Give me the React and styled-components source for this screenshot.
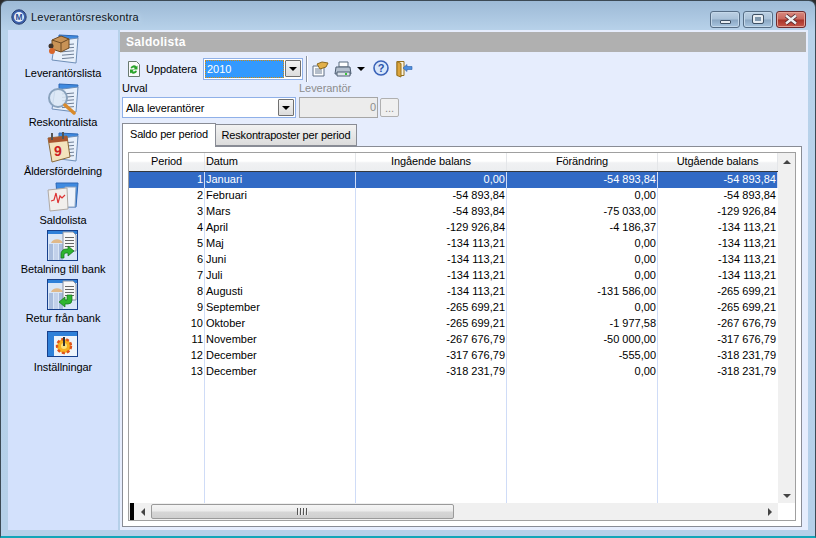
import React from "react";
import styled, { createGlobalStyle } from "styled-components";

const GlobalStyle = createGlobalStyle`
  html, body { margin: 0; padding: 0; background: #2b2b2b; overflow: hidden; }
  body { font-family: "Liberation Sans", Arial, sans-serif; font-size: 11px; color: #000; }
`;

const Window = styled.div`
  width: 816px;
  height: 538px;
  box-sizing: border-box;
  display: flex;
  flex-direction: column;
  border: 1px solid #3c4a55;
  border-bottom: 2px solid #12a5b8;
  border-radius: 7px 7px 0 0;
  background: linear-gradient(180deg, #9dbad6 0, #b8d2ea 30px, #b5d0e9 100%);
  overflow: hidden;
`;

const TitleBar = styled.div`
  height: 29px;
  flex: none;
  display: flex;
  align-items: center;
  padding: 0 9px 0 10px;
  gap: 4px;
`;

const LogoSlot = styled.span`
  display: inline-flex;
  margin-top: 3px;
`;

const TitleText = styled.div`
  flex: 1;
  font-size: 11px;
  color: #10161c;
  letter-spacing: 0.2px;
  padding-top: 3px;
  text-shadow: 0 0 6px #d8e8f6;
`;

const WinButtons = styled.div`
  display: flex;
  gap: 3px;
  margin-top: 7px;
`;

const WinButton = styled.div`
  width: 30px;
  height: 17px;
  box-sizing: border-box;
  border: 1px solid ${(p) => (p.$close ? "#6d2b2f" : "#566d85")};
  border-radius: 3px;
  display: flex;
  align-items: center;
  justify-content: center;
  box-shadow: inset 0 0 0 1px ${(p) => (p.$close ? "#e3a195" : "#c4d8ea")};
  background: ${(p) =>
    p.$close
      ? "linear-gradient(180deg, #d8897f 0, #c8665c 48%, #a83328 52%, #c6574a 100%)"
      : "linear-gradient(180deg, #bcd0e3 0, #a9c1d8 48%, #8aa6c2 52%, #a9c6e0 100%)"};
`;

const MinGlyph = styled.div`
  width: 11px;
  height: 4px;
  box-sizing: border-box;
  margin-top: 5px;
  background: #e8edf2;
  border: 1px solid #3f5165;
  border-radius: 1px;
`;

const MaxGlyph = styled.div`
  width: 10px;
  height: 8px;
  box-sizing: border-box;
  background: #7f97ad;
  border: 2px solid #e8edf2;
  outline: 1px solid #3f5165;
  border-radius: 1px;
`;

const Body = styled.div`
  flex: 1;
  min-height: 0;
  display: flex;
  padding: 0 7px 6px 7px;
`;

const Sidebar = styled.nav`
  width: 110px;
  flex: none;
  background: #d3e1fc;
  display: flex;
  flex-direction: column;
  align-items: center;
  padding-top: 3px;
  box-sizing: border-box;
  margin-right: 2px;
`;

const NavItem = styled.div`
  height: 49px;
  width: 100%;
  flex: none;
  display: flex;
  flex-direction: column;
  align-items: center;
  justify-content: flex-start;
  font-size: 11px;
  line-height: 13px;
  letter-spacing: -0.08px;
  svg { display: block; margin-bottom: 1px; width: 32px; height: 33px; flex: none; }
`;

const Main = styled.main`
  flex: 1;
  min-width: 0;
  display: flex;
  flex-direction: column;
  background: #e6edfd;
  padding: 2px 0 0;
`;

const Heading = styled.div`
  height: 20px;
  flex: none;
  background: #b0b0b0;
  color: #fff;
  font-weight: bold;
  font-size: 12px;
  line-height: 20px;
  padding-left: 6px;
  letter-spacing: 0.3px;
  margin-right: 2px;
`;

const Toolbar = styled.div`
  height: 33px;
  flex: none;
  display: flex;
  align-items: center;
  padding-left: 6px;
`;

const ToolIcon = styled.span`
  display: inline-flex;
  width: ${(p) => p.$w || 18}px;
  height: 18px;
  margin-right: ${(p) => p.$gap ?? 3}px;
  flex: none;
  svg { display: block; }
`;

const ToolLabel = styled.span`
  margin: 0 6px 0 4px;
  letter-spacing: -0.05px;
`;

const Combo = styled.div`
  width: ${(p) => p.$w}px;
  height: ${(p) => p.$h || 21}px;
  box-sizing: border-box;
  display: flex;
  align-items: center;
  background: #fff;
  border: 1px solid #8fb0e8;
  padding: 1px;
  flex: none;
`;

const ComboValue = styled.div`
  flex: 1;
  height: 100%;
  display: flex;
  align-items: center;
  box-sizing: border-box;
  padding-left: 2px;
  letter-spacing: -0.1px;
  ${(p) =>
    p.$focus &&
    `background: #3399ff; color: #fff; outline: 1px dotted #d08a10; outline-offset: -1px; letter-spacing: 0;`}
`;

const ComboButton = styled.div`
  width: 16px;
  height: 17px;
  box-sizing: border-box;
  margin-left: 1px;
  border: 1px solid #707070;
  border-radius: 1px;
  background: linear-gradient(180deg, #f4f4f4, #dcdcdc);
  display: flex;
  align-items: center;
  justify-content: center;
  &::after {
    content: "";
    border-left: 4px solid transparent;
    border-right: 4px solid transparent;
    border-top: 4px solid #000;
    margin-top: 1px;
  }
`;

const Divider = styled.div`
  width: 1px;
  height: 26px;
  background: #8a94a6;
  border-right: 1px solid #fff;
  margin: 0 3px 0 3px;
`;

const ArrowDown = styled.span`
  width: 0;
  height: 0;
  border-left: 4px solid transparent;
  border-right: 4px solid transparent;
  border-top: 4px solid #000;
  margin: 0 8px 0 1px;
`;

const FilterRow = styled.div`
  display: grid;
  grid-template-columns: 174px 79px 24px;
  column-gap: 3px;
  padding-left: 2px;
  height: 37px;
  flex: none;
`;

const FieldLabel = styled.div`
  height: 13px;
  line-height: 13px;
  margin-bottom: 2px;
  color: ${(p) => (p.$disabled ? "#8c8c8c" : "#000")};
  margin-top: -3px;
  letter-spacing: -0.05px;
`;

const NumberInput = styled.div`
  height: 21px;
  box-sizing: border-box;
  background: #ececec;
  border: 1px solid #a6a6a6;
  color: #8c8c8c;
  text-align: right;
  line-height: 19px;
  padding-right: 1px;
`;

const EllipsisButton = styled.div`
  margin: 13px 0 0 -1px;
  width: 19px;
  height: 19px;
  box-sizing: border-box;
  border: 1px solid #b0b0b0;
  border-radius: 2px;
  background: #f0f0f0;
  color: #8c8c8c;
  text-align: center;
  line-height: 18px;
`;

const Tabs = styled.div`
  height: 24px;
  flex: none;
  display: flex;
  align-items: flex-end;
  padding-left: 2px;
  position: relative;
  z-index: 1;
`;

const Tab = styled.div`
  box-sizing: border-box;
  height: ${(p) => (p.$active ? "24px" : "22px")};
  width: ${(p) => (p.$active ? "94px" : "141px")};
  border: 1px solid #898c95;
  border-bottom: ${(p) => (p.$active ? "none" : "1px solid #898c95")};
  border-left: ${(p) => (p.$active ? "1px solid #898c95" : "none")};
  background: ${(p) => (p.$active ? "#fff" : "linear-gradient(180deg, #f2f2f2, #dcdcdc)")};
  display: flex;
  align-items: center;
  justify-content: center;
  padding-bottom: ${(p) => (p.$active ? "3px" : "0")};
  margin-bottom: ${(p) => (p.$active ? "-1px" : "0")};
  letter-spacing: -0.17px;
`;

const TabPanel = styled.div`
  flex: 1;
  min-height: 0;
  margin: 0 2px 3px 2px;
  box-sizing: border-box;
  border: 1px solid #898c95;
  background: #fff;
  padding: 5px;
  width: 680px;
`;

const Grid = styled.div`
  box-sizing: border-box;
  height: 100%;
  border: 1px solid #a0a0a0;
  display: grid;
  grid-template-columns: 1fr 17px;
  grid-template-rows: 1fr 17px;
`;

const TableArea = styled.div`
  position: relative;
  overflow: hidden;
  display: flex;
  flex-direction: column;
`;

const HeadRow = styled.div`
  display: grid;
  grid-template-columns: 76px 151px 151px 151px 120px;
  height: 18px;
  flex: none;
  background: linear-gradient(180deg, #fff 0, #fff 45%, #f0f1f3 55%, #eceef0 100%);
  border-bottom: 1px solid #34383d;
`;

const HeadCell = styled.div`
  text-align: ${(p) => p.$align || "center"};
  padding-left: ${(p) => (p.$align === "left" ? "1px" : "0")};
  line-height: 16px;
  letter-spacing: -0.1px;
  border-right: 1px solid #e4e6e9;
  box-sizing: border-box;
`;

const Rows = styled.div`
  flex: 1;
  display: grid;
  grid-template-columns: 76px 151px 151px 151px 120px;
  grid-auto-rows: 16px;
  align-content: start;
  position: relative;
`;

const ColumnLines = styled.div`
  position: absolute;
  inset: 0;
  display: grid;
  grid-template-columns: 76px 151px 151px 151px 120px;
  pointer-events: none;
  div { border-right: 1px solid #cfdcf7; box-sizing: border-box; }
  div:last-child { border-right: none; }
`;

const Cell = styled.div`
  position: relative;
  z-index: 1;
  height: 16px;
  line-height: 14px;
  box-sizing: border-box;
  padding: ${(p) => (p.$left ? "0 0 0 1px" : "0 1px 0 0")};
  text-align: ${(p) => (p.$left ? "left" : "right")};
  border-right: 1px solid ${(p) => (p.$selected ? "#cfdcf7" : "transparent")};
  background: ${(p) => (p.$selected ? "#316ac5" : "transparent")};
  color: ${(p) => (p.$selected ? "#fff" : "#000")};
`;

const VScroll = styled.div`
  grid-row: 1;
  grid-column: 2;
  background: #f0f0f0;
  display: flex;
  flex-direction: column;
  justify-content: space-between;
  align-items: center;
  padding: 7px 0 5px;
`;

const HScroll = styled.div`
  grid-row: 2;
  grid-column: 1;
  background: #f0f0f0;
  display: flex;
  align-items: center;
  position: relative;
`;

const BlackMark = styled.div`
  width: 4px;
  height: 100%;
  margin-left: 1px;
  background: #000;
  flex: none;
`;

const ScrollSlot = styled.div`
  width: 17px;
  flex: none;
  display: flex;
  align-items: center;
  justify-content: center;
  margin-left: ${(p) => (p.$end ? "auto" : "0")};
`;

const Thumb = styled.div`
  width: 303px;
  height: 15px;
  box-sizing: border-box;
  border: 1px solid #9a9a9a;
  border-radius: 2px;
  background: linear-gradient(180deg, #f5f5f5 0, #ececec 45%, #d6d6d6 55%, #cfcfcf 100%);
  display: flex;
  align-items: center;
  justify-content: center;
  gap: 1px;
  i { width: 1px; height: 7px; background: #555; border-right: 1px solid #eee; }
`;

const Tri = styled.span`
  width: 0;
  height: 0;
  ${(p) =>
    p.$dir === "up" &&
    `border-left: 4px solid transparent; border-right: 4px solid transparent; border-bottom: 4px solid #444;`}
  ${(p) =>
    p.$dir === "down" &&
    `border-left: 4px solid transparent; border-right: 4px solid transparent; border-top: 4px solid #444;`}
  ${(p) =>
    p.$dir === "left" &&
    `border-top: 4px solid transparent; border-bottom: 4px solid transparent; border-right: 4px solid #444;`}
  ${(p) =>
    p.$dir === "right" &&
    `border-top: 4px solid transparent; border-bottom: 4px solid transparent; border-left: 4px solid #444;`}
`;

const Corner = styled.div`
  grid-row: 2;
  grid-column: 2;
  background: #fff;
`;

// drawn icons

const Page = () => (
  <g>
    <path d="M12 2 l19 1 -1 6 -18 -1z" fill="#3f8ae0" stroke="#2c67b5" />
    <path d="M8 8 l23 -3 -2 25 -24 -3z" fill="#e8f0fb" stroke="#6f8fb8" />
    {[0, 1, 2, 3, 4].map((i) => (
      <path key={i} d={`M15 ${12 + i * 3.4} l12 -1`} stroke="#6f7f96" />
    ))}
  </g>
);

const SupplierIcon = () => (
  <svg viewBox="0 0 32 33">
    <Page />
    <path d="M5 7 l9 -4 8 3 v9 l-8 4 -9 -3z" fill="#c99356" stroke="#6e4a23" />
    <path d="M5 7 l9 3 8 -4 M14 10 v9" fill="none" stroke="#6e4a23" />
    <circle cx="4" cy="13" r="2.5" fill="#40342b" />
    <circle cx="5" cy="18" r="3" fill="#d9662b" />
  </svg>
);

const LedgerIcon = () => (
  <svg viewBox="0 0 32 33">
    <Page />
    <circle cx="11" cy="16" r="9" fill="#dbe8f5" fillOpacity=".85" stroke="#8aa3bd" strokeWidth="2" />
    <path d="M18 23 l9 8" stroke="#d98a2b" strokeWidth="3.5" strokeLinecap="round" />
  </svg>
);

const AgingIcon = () => (
  <svg viewBox="0 0 32 33">
    <Page />
    <path d="M1 7 l19 -2 3 21 -18 5z" fill="#f3e3bd" stroke="#8b6a3a" />
    <path d="M1 7 l19 -2 1 5 -19 2z" fill="#a9552f" />
    <rect x="4" y="2" width="2" height="7" fill="#555" />
    <rect x="15" y="1" width="2" height="7" fill="#555" />
    <text x="7" y="25" fontSize="14" fontWeight="bold" fontFamily="Liberation Sans" fill="#c22">9</text>
  </svg>
);

const BalanceIcon = () => (
  <svg viewBox="0 0 32 33">
    <path d="M9 3 h22 l-2 24 h-18z" fill="#3f8ae0" stroke="#2c67b5" />
    <path d="M18 7 h11 l-1 20 h-10z" fill="#eef3fa" stroke="#8aa2c0" />
    <path d="M1 10 l19 -2 1 21 -18 2z" fill="#f1efec" stroke="#b0aaa5" />
    <path d="M4 21 l3 -1 2 -7 2 10 2 -7 2 2 3 -3" fill="none" stroke="#d33" strokeWidth="1.2" />
  </svg>
);

const BankIcon = ({ back }) => (
  <svg viewBox="0 0 32 33">
    <rect x="0.5" y="1.5" width="30" height="30" fill="#d9e6f7" stroke="#17408c" />
    <rect x="1" y="2" width="29" height="3" fill="#2f80d8" />
    <path d="M4 14 a6.5 6 0 0 1 12 0z" fill="#e0b98a" />
    <rect x="2" y="15" width="4" height="16" fill="#a9bddd" />
    <rect x="7" y="15" width="4" height="16" fill="#c2d1ea" />
    <rect x="12" y="15" width="4" height="16" fill="#a9bddd" />
    <path d="M16 3 h10 l3 3 v16 h-13z" fill="#f7f7f7" stroke="#8a93a5" />
    {[0, 1, 2, 3].map((i) => (
      <rect key={i} x="18" y={8 + i * 3} width="9" height="1" fill="#666" />
    ))}
    {back ? (
      <path d="M25 17 v5 a4 4 0 0 1 -4 4 h-3 v3 l-6 -5 6 -5 v3 h2 v-5z" fill="#2fb52f" stroke="#12701a" strokeWidth=".7" />
    ) : (
      <path d="M14 29 v-4 a5 5 0 0 1 5 -5 h2 v-3 l6 5 -6 5 v-3 h-2 a2 2 0 0 0 -2 2 v3z" fill="#2fb52f" stroke="#12701a" strokeWidth=".7" />
    )}
  </svg>
);

const SettingsIcon = () => (
  <svg viewBox="0 0 32 33">
    <rect x="0.5" y="4.5" width="30" height="25" fill="#2f80d8" stroke="#17408c" />
    <rect x="7" y="9" width="23" height="20" fill="#eef4fb" />
    <circle cx="17" cy="19" r="7" fill="#f6b21f" stroke="#e0531a" strokeWidth="2.4" strokeDasharray="3 2" />
    <circle cx="17" cy="19" r="3" fill="#fbe27a" />
    <rect x="16" y="10" width="2" height="9" fill="#333" />
  </svg>
);

const RefreshIcon = () => (
  <svg width="16" height="18" viewBox="0 0 16 18">
    <path d="M2.5 1.5 h8 l3 3 v12 h-11z" fill="#fafafa" stroke="#6a7a70" />
    <path d="M4.5 8 a3.5 3.5 0 0 1 6 -1.5 l1 -1 v4 h-4 l1.4 -1.4 a2 2 0 0 0 -3 .4z" fill="#2aa32a" />
    <path d="M11 11 a3.5 3.5 0 0 1 -6 1.5 l-1 1 v-4 h4 l-1.4 1.4 a2 2 0 0 0 3 -.4z" fill="#2aa32a" />
  </svg>
);

const PropsIcon = () => (
  <svg width="18" height="18" viewBox="0 0 18 18">
    <path d="M2 6 h11 v10 h-11z" fill="#fdfdfd" stroke="#5e6f85" />
    <path d="M4 9 h7 M4 11 h7 M4 13 h7" stroke="#6d7f95" />
    <path d="M6 4 l5 -2 6 1 -2 4 -6 2z" fill="#e2b04a" stroke="#8b6a22" />
  </svg>
);

const PrinterIcon = () => (
  <svg width="18" height="18" viewBox="0 0 18 18">
    <path d="M5 2 h9 v5 h-9z" fill="#fff" stroke="#5b6c80" />
    <path d="M2 7 h14 l1 7 h-16z" fill="#b4c0cf" stroke="#4f5f73" />
    <path d="M3 12 h13 v4 h-13z" fill="#dbe2ea" stroke="#4f5f73" />
    <rect x="11" y="13" width="2" height="2" fill="#3ac43a" />
  </svg>
);

const HelpIcon = () => (
  <svg width="16" height="16" viewBox="0 0 16 16">
    <circle cx="8" cy="8" r="7" fill="#d8e6fa" stroke="#3a62b8" strokeWidth="1.6" />
    <text x="8" y="12" textAnchor="middle" fontSize="11" fontWeight="bold" fontFamily="Liberation Sans" fill="#2a52a8">?</text>
  </svg>
);

const ExitIcon = () => (
  <svg width="18" height="18" viewBox="0 0 18 18">
    <path d="M2 1.5 h7 v14 h-7z" fill="#fbf3dc" stroke="#96711f" />
    <path d="M2 1.5 l4 2 v13.5 l-4 -1.5z" fill="#dda53c" stroke="#96711f" />
    <path d="M8 8 l4 -3.5 v2 h5 v3 h-5 v2z" fill="#4f8fe0" stroke="#2c5fa8" strokeWidth=".6" />
  </svg>
);

const AppLogo = () => (
  <svg width="16" height="16" viewBox="0 0 16 16">
    <circle cx="8" cy="8" r="7.2" fill="#3c62ad" stroke="#2a3e70" />
    <circle cx="8" cy="8" r="5" fill="#e6eef9" />
    <text x="8" y="11" textAnchor="middle" fontSize="8.5" fontWeight="bold" fontFamily="Liberation Sans" fill="#2f4f96">M</text>
  </svg>
);

const CloseGlyph = () => (
  <svg width="14" height="11" viewBox="0 0 14 11">
    <path d="M2 1.5 L12 9.5 M12 1.5 L2 9.5" stroke="#4a2226" strokeWidth="4" />
    <path d="M2 1.5 L12 9.5 M12 1.5 L2 9.5" stroke="#eef0f2" strokeWidth="2.4" />
  </svg>
);

const navItems = [
  { label: "Leverantörslista", icon: <SupplierIcon /> },
  { label: "Reskontralista", icon: <LedgerIcon /> },
  { label: "Åldersfördelning", icon: <AgingIcon /> },
  { label: "Saldolista", icon: <BalanceIcon /> },
  { label: "Betalning till bank", icon: <BankIcon /> },
  { label: "Retur från bank", icon: <BankIcon back /> },
  { label: "Inställningar", icon: <SettingsIcon /> },
];

const rows = [
  [1, "Januari", "0,00", "-54 893,84", "-54 893,84"],
  [2, "Februari", "-54 893,84", "0,00", "-54 893,84"],
  [3, "Mars", "-54 893,84", "-75 033,00", "-129 926,84"],
  [4, "April", "-129 926,84", "-4 186,37", "-134 113,21"],
  [5, "Maj", "-134 113,21", "0,00", "-134 113,21"],
  [6, "Juni", "-134 113,21", "0,00", "-134 113,21"],
  [7, "Juli", "-134 113,21", "0,00", "-134 113,21"],
  [8, "Augusti", "-134 113,21", "-131 586,00", "-265 699,21"],
  [9, "September", "-265 699,21", "0,00", "-265 699,21"],
  [10, "Oktober", "-265 699,21", "-1 977,58", "-267 676,79"],
  [11, "November", "-267 676,79", "-50 000,00", "-317 676,79"],
  [12, "December", "-317 676,79", "-555,00", "-318 231,79"],
  [13, "December", "-318 231,79", "0,00", "-318 231,79"],
];

const App = () => {
  return (
    <>
      <GlobalStyle />
      <Window>
        <TitleBar>
          <LogoSlot><AppLogo /></LogoSlot>
          <TitleText>Leverantörsreskontra</TitleText>
          <WinButtons>
            <WinButton><MinGlyph /></WinButton>
            <WinButton><MaxGlyph /></WinButton>
            <WinButton $close><CloseGlyph /></WinButton>
          </WinButtons>
        </TitleBar>
        <Body>
          <Sidebar>
            {navItems.map((item) => (
              <NavItem key={item.label}>
                {item.icon}
                <span>{item.label}</span>
              </NavItem>
            ))}
          </Sidebar>
          <Main>
            <Heading>Saldolista</Heading>
            <Toolbar>
              <ToolIcon $w={16} $gap={0}><RefreshIcon /></ToolIcon>
              <ToolLabel>Uppdatera</ToolLabel>
              <Combo $w={100} $h={22}>
                <ComboValue $focus>2010</ComboValue>
                <ComboButton />
              </Combo>
              <Divider />
              <ToolIcon $gap={5}><PropsIcon /></ToolIcon>
              <ToolIcon $gap={4}><PrinterIcon /></ToolIcon>
              <ArrowDown />
              <ToolIcon $w={16} $gap={6}><HelpIcon /></ToolIcon>
              <ToolIcon><ExitIcon /></ToolIcon>
            </Toolbar>
            <FilterRow>
              <div>
                <FieldLabel>Urval</FieldLabel>
                <Combo $w={174}>
                  <ComboValue>Alla leverantörer</ComboValue>
                  <ComboButton />
                </Combo>
              </div>
              <div>
                <FieldLabel $disabled>Leverantör</FieldLabel>
                <NumberInput>0</NumberInput>
              </div>
              <EllipsisButton>...</EllipsisButton>
            </FilterRow>
            <Tabs>
              <Tab $active>Saldo per period</Tab>
              <Tab>Reskontraposter per period</Tab>
            </Tabs>
            <TabPanel>
              <Grid>
                <TableArea>
                  <HeadRow>
                    <HeadCell>Period</HeadCell>
                    <HeadCell $align="left">Datum</HeadCell>
                    <HeadCell>Ingående balans</HeadCell>
                    <HeadCell>Förändring</HeadCell>
                    <HeadCell>Utgående balans</HeadCell>
                  </HeadRow>
                  <Rows>
                    <ColumnLines>
                      <div /><div /><div /><div /><div />
                    </ColumnLines>
                    {rows.map((row, i) =>
                      row.map((value, c) => (
                        <Cell key={`${i}-${c}`} $left={c === 1} $selected={i === 0}>
                          {value}
                        </Cell>
                      ))
                    )}
                  </Rows>
                </TableArea>
                <VScroll>
                  <Tri $dir="up" />
                  <Tri $dir="down" />
                </VScroll>
                <HScroll>
                  <BlackMark />
                  <ScrollSlot><Tri $dir="left" /></ScrollSlot>
                  <Thumb><i /><i /><i /><i /></Thumb>
                  <ScrollSlot $end><Tri $dir="right" /></ScrollSlot>
                </HScroll>
                <Corner />
              </Grid>
            </TabPanel>
          </Main>
        </Body>
      </Window>
    </>
  );
};

export default App;
